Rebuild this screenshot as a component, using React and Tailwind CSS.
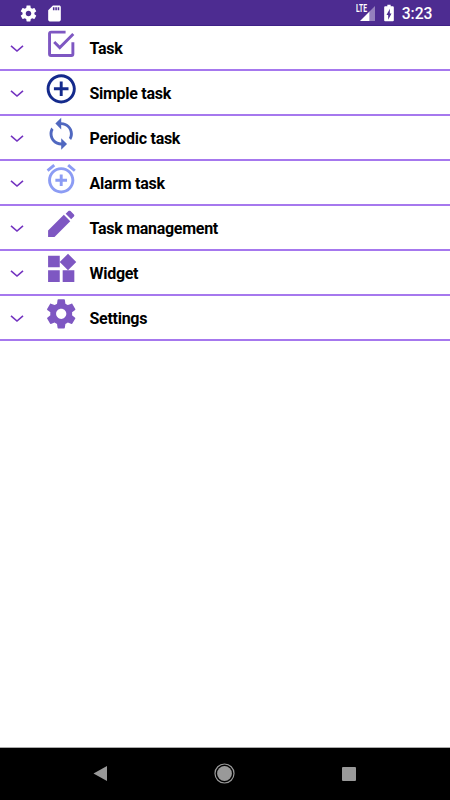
const rows = [
  { label: 'Task', color: 'text-[#7e57c2]', d: 'M19 19H5V5H15V3H5C3.89 3 3 3.89 3 5V19A2 2 0 0 0 5 21H19A2 2 0 0 0 21 19V11H19M7.91 10.08L6.5 11.5L11 16L21 6L19.59 4.58L11 13.17L7.91 10.08Z' },
  { label: 'Simple task', color: 'text-[#142a8c]', d: 'M13 7h-2v4H7v2h4v4h2v-4h4v-2h-4V7zm-1-5C6.48 2 2 6.48 2 12s4.48 10 10 10 10-4.48 10-10S17.52 2 12 2zm0 18c-4.41 0-8-3.59-8-8s3.59-8 8-8 8 3.59 8 8-3.59 8-8 8z' },
  { label: 'Periodic task', color: 'text-[#5068c0]', d: 'M12 4V1L8 5l4 4V6c3.31 0 6 2.69 6 6 0 1.01-.25 1.97-.7 2.8l1.46 1.46C19.54 15.03 20 13.57 20 12c0-4.42-3.58-8-8-8zm0 14c-3.31 0-6-2.69-6-6 0-1.01.25-1.97.7-2.8L5.24 7.74C4.46 8.97 4 10.43 4 12c0 4.42 3.58 8 8 8v3l4-4-4-4v3z' },
  { label: 'Alarm task', color: 'text-[#8c9cf4]', d: 'M7.88 3.39L6.6 1.86 2 5.71l1.29 1.53 4.59-3.85zM22 5.72l-4.6-3.86-1.29 1.53 4.6 3.86L22 5.72zM12 4c-4.97 0-9 4.03-9 9s4.02 9 9 9c4.97 0 9-4.03 9-9s-4.03-9-9-9zm0 16c-3.87 0-7-3.13-7-7s3.13-7 7-7 7 3.13 7 7-3.13 7-7 7zm1-11h-2v3H8v2h3v3h2v-3h3v-2h-3V9z' },
  { label: 'Task management', color: 'text-[#7e57c2]', d: 'M3 16.6V21h4.4L18.2 10.2l-4.4-4.4L3 16.6zM20.71 7.04c.39-.39.39-1.02 0-1.41l-2.34-2.34c-.39-.39-1.02-.39-1.41 0l-1.900 1.900 3.750 3.750 1.900-1.900z' },
  { label: 'Widget', color: 'text-[#7e57c2]', d: 'M13 13v8h8v-8h-8zM3 21h8v-8H3v8zM3 3v8h8V3H3zm13.66-1.31L11 7.34 16.66 13l5.66-5.66-5.66-5.65z' },
  { label: 'Settings', color: 'text-[#7e57c2]', d: 'M19.43 12.98c.04-.32.07-.64.07-.98s-.03-.66-.07-.98l2.11-1.65c.19-.15.24-.42.12-.64l-2-3.46c-.12-.22-.39-.3-.61-.22l-2.49 1c-.52-.4-1.08-.73-1.69-.98l-.38-2.65C14.46 2.18 14.25 2 14 2h-4c-.25 0-.46.18-.49.42l-.38 2.65c-.61.25-1.17.59-1.69.98l-2.49-1c-.23-.09-.49 0-.61.22l-2 3.46c-.13.22-.07.49.12.64l2.11 1.65c-.04.32-.07.65-.07.98s.03.66.07.98l-2.11 1.65c-.19.15-.24.42-.12.64l2 3.46c.12.22.39.3.61.22l2.49-1c.52.4 1.08.73 1.69.98l.38 2.65c.03.24.24.42.49.42h4c.25 0 .46-.18.49-.42l.38-2.65c.61-.25 1.17-.59 1.69-.98l2.49 1c.23.09.49 0 .61-.22l2-3.46c.12-.22.07-.49-.12-.64l-2.11-1.65zM12 15.5c-1.93 0-3.5-1.57-3.5-3.5s1.57-3.5 3.5-3.5 3.5 1.57 3.5 3.5-1.57 3.5-3.5 3.5z' },
];

const gear = rows[6].d;

function StatusBar() {
  return (
    <header className="flex h-[26px] shrink-0 items-center border-b border-[#3f2187] bg-[#4d2c91] pt-px text-white">
      <svg className="ml-[19px] size-[19px]" viewBox="0 0 24 24" fill="currentColor"><path d={gear} /></svg>
      <svg className="ml-[7px] size-[19px]" viewBox="0 0 24 24" fill="currentColor">
        <path d="M18 2h-8L4.02 8 4 20c0 1.100.9 2 2 2h12c1.100 0 2-.9 2-2V4c0-1.100-.9-2-2-2zm-6 6h-2V4h2v4zm3 0h-2V4h2v4zm3 0h-2V4h2v4z" />
      </svg>
      <div className="ml-auto flex items-center">
        <span className="-mr-[7px] mb-[7px] origin-right scale-x-[.64] text-[10.500px] leading-none font-bold">LTE</span>
        <svg className="mr-[4px] h-[15px] w-[15px]" viewBox="0 0 15 15">
          <path d="M15 0V15H9.500V5.500Z" fill="#fff" opacity=".4" />
          <path d="M0 15L9.500 5.500V15Z" fill="#fff" />
        </svg>
        <svg className="mr-[3px] size-[20px]" viewBox="0 0 24 24" fill="currentColor">
          <path d="M16.200 4H14V2h-4v2H7.800C6.900 4 6.200 4.600 6.200 5.330v15.330C6.200 21.400 6.900 22 7.800 22h8.400c.9 0 1.600-.6 1.600-1.330V5.330C17.800 4.600 17.100 4 16.200 4zM11 20v-5.500H9L13 7v5.500h2L11 20z" />
        </svg>
        <span className="mt-[2px] mr-[18px] -ml-px origin-right scale-x-[.98] text-[16px] leading-none font-medium">3:23</span>
      </div>
    </header>
  );
}

function Row({ label, color, d }) {
  return (
    <li className="flex h-[45px] items-start border-b-2 border-[#a678ee]">
      <svg className="mt-[18px] ml-[10px] h-[9px] w-[14px] text-[#7333c0]" viewBox="0 0 14 9" fill="none" stroke="currentColor" strokeWidth="1.600">
        <path d="M1 1.800L7 7L13 1.800" />
      </svg>
      <svg className={`ml-[19.500px] size-[35px] ${color}`} viewBox="0.200 -0.200 24 24" fill="currentColor"><path d={d} /></svg>
      <span className="mt-[13px] ml-[11px] text-[16px] leading-5 font-bold tracking-[-0.28px] text-black">{label}</span>
    </li>
  );
}

export default function App() {
  return (
    <div className="flex h-[800px] w-[450px] flex-col overflow-hidden bg-white font-['Roboto',sans-serif]">
      <StatusBar />
      <main className="flex-1">
        <ul>{rows.map((row) => <Row key={row.label} {...row} />)}</ul>
      </main>
      <nav className="flex h-[53px] shrink-0 items-center justify-between border-t border-[#aaa] bg-black pr-[94px] pb-px pl-[93px] text-[#999]">
        <svg className="h-[15px] w-[14px]" viewBox="0 0 14 15" fill="currentColor"><path d="M14 0V15L0.500 7.500Z" /></svg>
        <svg className="size-[21px]" viewBox="0 0 21 21">
          <circle cx="10.500" cy="10.500" r="9.500" fill="none" stroke="currentColor" strokeWidth="1.200" />
          <circle cx="10.500" cy="10.500" r="7.400" fill="currentColor" />
        </svg>
        <span className="size-[14px] rounded-[1px] bg-[#999]" />
      </nav>
    </div>
  );
}
